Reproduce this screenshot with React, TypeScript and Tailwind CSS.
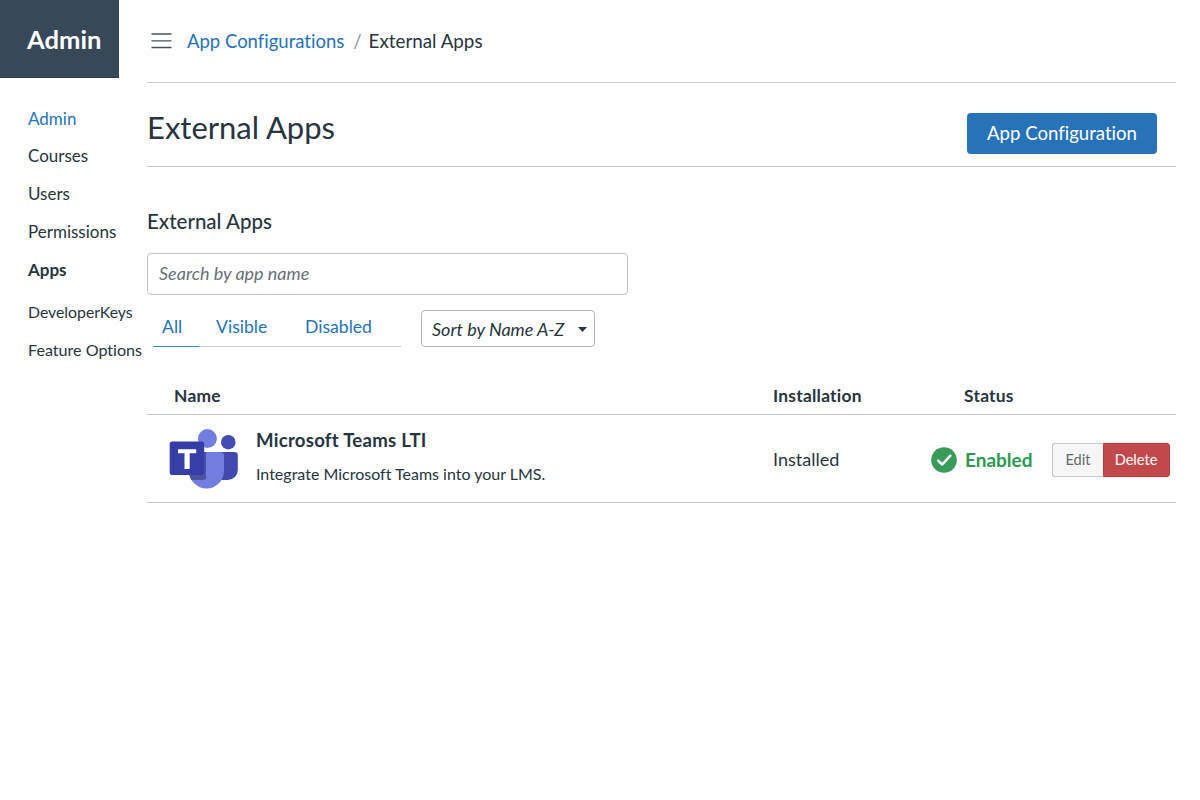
import { useState } from 'react';

interface NavItem {
  label: string;
  className: string;
}

interface ExternalApp {
  id: string;
  name: string;
  description: string;
  installation: string;
  status: string;
}

const navItems: NavItem[] = [
  { label: 'Admin', className: 'h-[36px] text-[#2573b8]' },
  { label: 'Courses', className: 'h-[37px]' },
  { label: 'Users', className: 'h-[39px]' },
  { label: 'Permissions', className: 'h-[38px]' },
  { label: 'Apps', className: 'h-[37px] font-bold' },
  { label: 'DeveloperKeys', className: 'mt-[5px] h-[38px] text-[15.8px]' },
  { label: 'Feature Options', className: 'h-[38px] text-[16.1px]' },
];

const apps: ExternalApp[] = [
  {
    id: 'teams',
    name: 'Microsoft Teams LTI',
    description: 'Integrate Microsoft Teams into your LMS.',
    installation: 'Installed',
    status: 'Enabled',
  },
];

const tabs = [
  { label: 'All', tabClass: 'w-[46px]', labelClass: 'pl-[9px]' },
  { label: 'Visible', tabClass: 'w-[88px]', labelClass: 'pl-[17px]' },
  { label: 'Disabled', tabClass: 'w-[114px]', labelClass: 'pl-[18px]' },
];

function TeamsLogo() {
  return (
    <svg width="70" height="60" viewBox="0 0 70 60" className="block shrink-0">
      <circle cx="59.3" cy="13.2" r="7.3" fill="#444bb3" />
      <path d="M50 23h15.5a3.3 3.3 0 0 1 3.3 3.3V41a10 10 0 0 1-10 10H50z" fill="#4149ae" />
      <circle cx="38.4" cy="9.6" r="9.5" fill="#727de0" />
      <path d="M20 23h31.5a3.5 3.5 0 0 1 3.5 3.5V42a17.5 17.5 0 0 1-35 0z" fill="#727de0" />
      <path d="M20 23h17v25a3 3 0 0 1-3 3H22.3A17.5 17.5 0 0 1 20 42z" fill="#4d539f" />
      <rect x="0.7" y="12.5" width="34.5" height="33.5" rx="2.5" fill="#363da6" />
      <path d="M9 20.3h18.2v4h-6.5V40h-5.2V24.3H9z" fill="#fff" />
    </svg>
  );
}

function CheckBadge() {
  return (
    <svg width="26" height="26" viewBox="0 0 26 26" className="block shrink-0">
      <circle cx="13" cy="13" r="12.8" fill="#389b5a" />
      <path d="M7.2 13.6l4 3.9 8.2-8.9" fill="none" stroke="#fff" strokeWidth="2.5" strokeLinecap="round" strokeLinejoin="round" />
    </svg>
  );
}

export default function App() {
  const [activeTab, setActiveTab] = useState('All');
  const [search, setSearch] = useState('');

  return (
    <div className="flex h-[800px] w-[1200px] bg-[#fefefe] font-['Lato',sans-serif] text-[#273540] [font-variant-ligatures:none]">
      <aside className="w-[147px] shrink-0 whitespace-nowrap">
        <div className="flex h-[78px] w-[119px] items-center border-b border-[#2b3b49] bg-[#374858] pl-[27px] pt-px text-[25.6px] font-bold text-white">
          Admin
        </div>
        <nav className="flex flex-col pl-7 pt-[23px] text-[17px]">
          {navItems.map((item) => (
            <a key={item.label} className={`flex items-center ${item.className}`}>
              {item.label}
            </a>
          ))}
        </nav>
      </aside>

      <main className="w-[1029px] shrink-0 whitespace-nowrap">
        <header className="flex h-[83px] items-center border-b border-[#c5c8cc] pl-[4px] text-[18.5px]">
          <svg width="21" height="16" viewBox="0 0 21 16" className="mr-[15px] block">
            <path d="M.5 1h20M.5 7.9h20M.5 14.5h20" stroke="#44515c" strokeWidth="1.4" />
          </svg>
          <a className="pt-px text-[#2573b8]">App Configurations</a>
          <span className="ml-[9px] mr-[7px] pt-px text-[#8a9299]">/</span>
          <span className="pt-px text-[18.8px]">External Apps</span>
        </header>

        <div className="flex h-[84px] justify-between border-b border-[#c5c8cc] pr-[19px]">
          <h1 className="pt-[21px] text-[31px] leading-[46px]">External Apps</h1>
          <button className="mt-[30px] h-[41px] w-[190px] rounded-[4px] bg-[#2873b8] text-[18.6px] text-white">
            App Configuration
          </button>
        </div>

        <h2 className="mt-[38px] h-[32px] text-[20.5px] leading-[32px] font-medium">External Apps</h2>

        <input
          value={search}
          onChange={(e) => setSearch(e.target.value)}
          placeholder="Search by app name"
          className="mt-[16px] block h-[42px] w-[481px] rounded-[4px] border border-[#bfc1c4] bg-white px-[11px] pb-[3px] text-[18px] italic outline-none placeholder:text-[#687078]"
        />

        <div className="mt-[15px] flex h-[38px] pl-[6px]">
          <div className="flex h-[37px] text-[17.6px] text-[#2573b8]">
            {tabs.map((tab) => (
              <div key={tab.label} className={tab.tabClass}>
                <button
                  onClick={() => setActiveTab(tab.label)}
                  className={`flex h-[36px] w-full items-center pb-px ${tab.labelClass}`}
                >
                  {tab.label}
                </button>
                <div className={`h-px ${activeTab === tab.label ? 'bg-[#3289cf]' : 'bg-[#c5c8cc]'}`} />
              </div>
            ))}
          </div>
          <button className="ml-[20px] flex h-[37px] w-[174px] items-center justify-between rounded-[4px] border border-[#b5b8bb] bg-white pl-[10px] pr-[7px] pt-px text-[18px] italic">
            Sort by Name A-Z
            <svg width="9" height="5" viewBox="0 0 9 5" className="mt-px">
              <path d="M0 0h9L4.5 5z" fill="#273540" />
            </svg>
          </button>
        </div>

        <div className="mt-[28px] flex h-[39px] items-center border-b border-[#c5c8cc] pt-[2px] text-[17.4px] font-bold tracking-[0.25px]">
          <div className="w-[626px] pl-[27px]">Name</div>
          <div className="w-[191px]">Installation</div>
          <div>Status</div>
        </div>

        {apps.map((app) => (
          <div key={app.id} className="flex h-[88px] items-center border-b border-[#c5c8cc]">
            <div className="flex w-[626px] items-center pl-[22px]">
              <TeamsLogo />
              <div className="ml-[17px] pb-[4px]">
                <div className="h-[34px] text-[18.6px] leading-[34px] font-bold tracking-[0.25px]">{app.name}</div>
                <div className="h-[34px] text-[16px] leading-[34px]">{app.description}</div>
              </div>
            </div>
            <div className="w-[158px] pt-[2px] text-[18px]">{app.installation}</div>
            <div className="flex w-[121px] items-center gap-[8px] pt-[3px] text-[19px] font-bold text-[#2c9950]">
              <CheckBadge />
              {app.status}
            </div>
            <div className="mt-[3px] flex h-[34px] text-[14.6px]">
              <button className="w-[51px] rounded-l-[3px] border border-r-0 border-[#c5c8cb] bg-[#f6f6f7] text-[#626a72]">
                Edit
              </button>
              <button className="w-[67px] rounded-r-[3px] border border-[#bb3c3e] bg-[#c2494b] pr-px text-white">
                Delete
              </button>
            </div>
          </div>
        ))}
      </main>
    </div>
  );
}
